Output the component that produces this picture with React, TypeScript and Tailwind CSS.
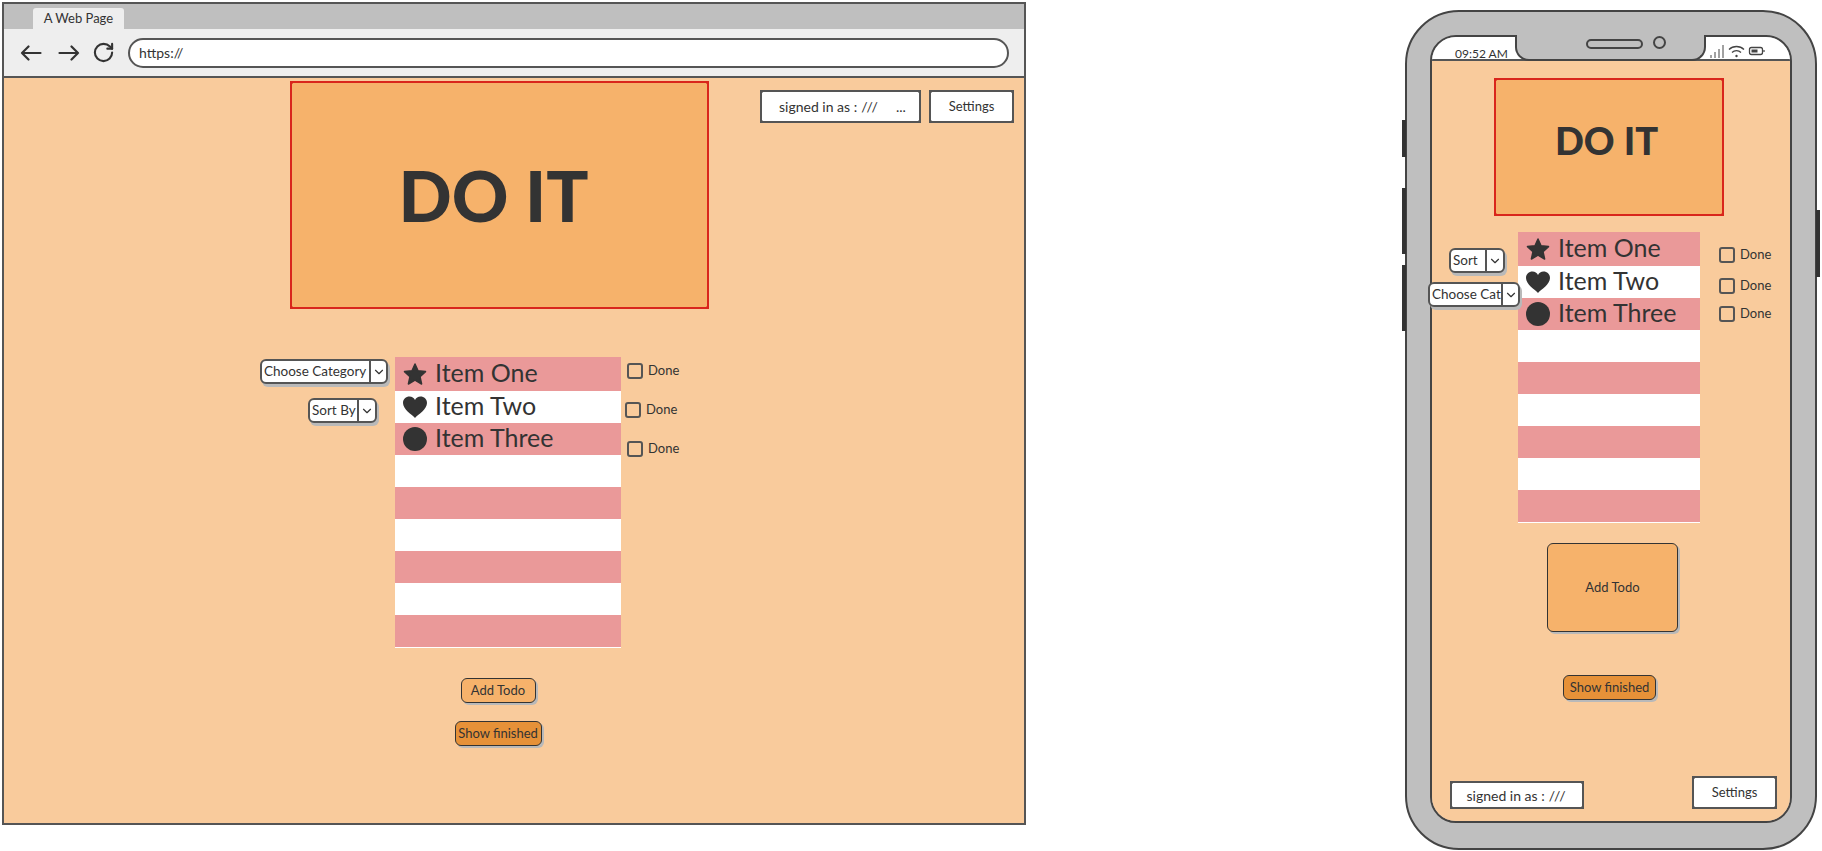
import { ChevronDown, RotateCw } from "lucide-react";

const Star = () => (
  <svg width="24" height="24" viewBox="0 0 24 24" className="shrink-0">
    <path
      d="M12 2 L15 8.8 L22.5 9.6 L17 14.6 L18.6 22 L12 18.2 L5.4 22 L7 14.6 L1.5 9.6 L9 8.8 Z"
      fill="#333"
      stroke="#333"
      strokeWidth="1.5"
      strokeLinejoin="round"
    />
  </svg>
);

const Heart = () => (
  <svg width="24" height="24" viewBox="0 0 24 24" className="shrink-0">
    <path
      d="M12 23 C9 19.5 0 14.5 0 8 C0 4 3 1.5 6.5 1.5 C9 1.5 11 3 12 5 C13 3 15 1.5 17.5 1.5 C21 1.5 24 4 24 8 C24 14.5 15 19.5 12 23 Z"
      fill="#333"
    />
  </svg>
);

const Dot = () => (
  <svg width="24" height="24" viewBox="0 0 24 24" className="shrink-0">
    <circle cx="12" cy="12" r="12" fill="#333" />
  </svg>
);

const BackArrow = () => (
  <svg width="22" height="16" viewBox="0 0 22 16" fill="none" stroke="#333" strokeWidth="2.2" strokeLinecap="round" strokeLinejoin="round" className="shrink-0">
    <path d="M20.5 8H2M8.5 1.5L2 8l6.5 6.5" />
  </svg>
);

const ForwardArrow = () => (
  <svg width="22" height="16" viewBox="0 0 22 16" fill="none" stroke="#333" strokeWidth="2.2" strokeLinecap="round" strokeLinejoin="round" className="shrink-0">
    <path d="M1.5 8H20M13.5 1.5L20 8l-6.5 6.5" />
  </svg>
);

// little nubs the sketch style leaves on box corners
const Corners = ({ color }: { color: string }) => (
  <>
    <span className={`absolute -left-[2px] -top-[2px] w-[3px] h-[3px] rounded-full ${color}`} />
    <span className={`absolute -right-[2px] -top-[2px] w-[3px] h-[3px] rounded-full ${color}`} />
    <span className={`absolute -left-[2px] -bottom-[2px] w-[3px] h-[3px] rounded-full ${color}`} />
    <span className={`absolute -right-[2px] -bottom-[2px] w-[3px] h-[3px] rounded-full ${color}`} />
  </>
);

const Select = ({ label, width, split }: { label: string; width: string; split: string }) => (
  <div
    className={`${width} h-[25px] shrink-0 flex items-stretch rounded-[6px] border-2 border-[#555] bg-white shadow-[2px_3px_0_#b9b9b9] text-[13.5px] text-[#333]`}
  >
    <div className={`${split} overflow-hidden whitespace-nowrap pl-[2px] leading-[21px] border-r-2 border-[#555]`}>{label}</div>
    <div className="flex-1 flex items-center justify-center">
      <ChevronDown size={14} strokeWidth={2} />
    </div>
  </div>
);

const Done = ({ className }: { className: string }) => (
  <div className={`h-[16px] flex items-center gap-[5px] text-[13px] text-[#333] ${className}`}>
    <div className="w-[16px] h-[16px] rounded-[3px] border-2 border-[#555]" />
    <span>Done</span>
  </div>
);

const Rows = ({ width }: { width: string }) => (
  <div className={`${width} shrink-0 bg-white text-[#333] text-[25px]`}>
    <div className="h-[34px] bg-[#ea9999] flex items-center gap-[8px] pl-[8px]">
      <Star />
      <span className="-mt-[2px]">Item One</span>
    </div>
    <div className="h-[32px] flex items-center gap-[8px] pl-[8px]">
      <Heart />
      <span className="-mt-[2px]">Item Two</span>
    </div>
    <div className="h-[32px] bg-[#ea9999] flex items-center gap-[8px] pl-[8px]">
      <Dot />
      <span className="-mt-[2px]">Item Three</span>
    </div>
    <div className="h-[32px]" />
    <div className="h-[32px] bg-[#ea9999]" />
    <div className="h-[32px]" />
    <div className="h-[32px] bg-[#ea9999]" />
    <div className="h-[32px]" />
    <div className="h-[32px] bg-[#ea9999] mb-[1px]" />
  </div>
);

const Box = ({ children, className }: { children: React.ReactNode; className: string }) => (
  <div className={`relative shrink-0 bg-white border-2 border-[#555] flex items-center text-[#333] ${className}`}>
    <Corners color="bg-[#555]" />
    {children}
  </div>
);

const Btn = ({ children, className }: { children: React.ReactNode; className: string }) => (
  <div
    className={`shrink-0 flex items-center justify-center rounded-[6px] border border-[#333] text-[13px] text-[#333] shadow-[2px_2px_0_#b9b9b9] ${className}`}
  >
    {children}
  </div>
);

const Hero = ({ className, text }: { className: string; text: string }) => (
  <div className={`relative shrink-0 bg-[#f6b26b] border-2 border-[#d9261c] flex items-center justify-center font-black text-[#333] ${className} ${text}`}>
    <Corners color="bg-[#d9261c]" />
    DO IT
  </div>
);

const Browser = () => (
  <div className="ml-[2px] mt-[2px] w-[1024px] h-[823px] shrink-0 border-2 border-[#555] flex flex-col">
    <div className="h-[25px] bg-[#bfbfbf] pl-[29px] pt-[4px]">
      <div className="w-[91px] h-[21px] rounded-t-[3px] bg-[#eeeeee] text-[13px] text-[#333] text-center leading-[21px]">A Web Page</div>
    </div>
    <div className="h-[49px] bg-[#eeeeee] border-b-2 border-[#555] flex items-center pl-[16px] text-[#333]">
      <BackArrow />
      <div className="ml-[16px]">
        <ForwardArrow />
      </div>
      <RotateCw size={23} strokeWidth={2.2} className="ml-[12px] shrink-0" />
      <div className="ml-[13px] w-[881px] h-[30px] rounded-full border-2 border-[#555] bg-white pl-[9px] text-[14px] leading-[26px]">https://</div>
    </div>
    <div className="flex-1 bg-[#f9cb9c]">
      <div className="flex items-start">
        <Hero className="ml-[286px] mt-[3px] w-[419px] h-[228px] pt-[1px] pr-[12px]" text="text-[70px]" />
        <Box className="ml-[51px] mt-[12px] w-[161px] h-[33px] pl-[17px] text-[14px]">
          <span>signed in as : </span>
          <span className="ml-[4px] tracking-[2px]">///</span>
          <span className="ml-[16px]">...</span>
        </Box>
        <Box className="ml-[8px] mt-[12px] w-[85px] h-[33px] justify-center text-[13px]">Settings</Box>
      </div>
      <div className="flex items-start mt-[48px]">
        <div className="w-[391px] shrink-0 flex flex-col items-end pr-[7px] pt-[2px]">
          <Select label="Choose Category" width="w-[128px]" split="w-[109px]" />
          <div className="mt-[14px] mr-[11px]">
            <Select label="Sort By" width="w-[69px]" split="w-[49px]" />
          </div>
        </div>
        <Rows width="w-[226px]" />
        <div className="ml-[6px] pt-[6px] flex flex-col">
          <Done className="" />
          <Done className="mt-[23px] -ml-[2px]" />
          <Done className="mt-[23px]" />
        </div>
      </div>
      <div className="w-[988px] mt-[30px] flex flex-col items-center">
        <Btn className="w-[75px] h-[25px] bg-[#f6b26b]">Add Todo</Btn>
        <Btn className="mt-[18px] w-[87px] h-[25px] bg-[#e69138]">Show finished</Btn>
      </div>
    </div>
  </div>
);

const Phone = () => (
  <div className="relative ml-[379px] mt-[10px] w-[412px] h-[840px] shrink-0 rounded-[54px] border-2 border-[#444] bg-[#bfbfbf] pl-[23px] pt-[23px]">
    {/* side buttons */}
    <div className="absolute -left-[5px] top-[108px] w-[4px] h-[37px] bg-[#333]" />
    <div className="absolute -left-[5px] top-[176px] w-[4px] h-[66px] bg-[#333]" />
    <div className="absolute -left-[5px] top-[253px] w-[4px] h-[66px] bg-[#333]" />
    <div className="absolute -right-[5px] top-[198px] w-[4px] h-[67px] bg-[#333]" />

    <div className="relative w-[362px] h-[788px] rounded-[26px] border-2 border-[#444] flex flex-col">
      <div className="absolute -top-[2px] left-[83px] w-[191px] h-[26px] rounded-b-[14px] border-x-2 border-b-2 border-[#444] bg-[#bfbfbf] flex items-start pl-[69px] pt-[4px]">
        <div className="w-[57px] h-[10px] rounded-full border-2 border-[#444]" />
        <div className="ml-[10px] -mt-[3px] w-[13px] h-[13px] rounded-full border-2 border-[#444]" />
      </div>
      <div className="h-[24px] shrink-0 rounded-t-[24px] bg-white border-b-2 border-[#555] flex items-end overflow-hidden">
        <div className="w-[274px] shrink-0 pl-[23px] text-[12px] leading-[13px] -mb-[1px] text-[#333]">09:52 AM</div>
        <svg width="56" height="14" viewBox="0 0 56 14" className="ml-[4px] mb-[1px] shrink-0" fill="none" stroke="#444">
          <path d="M1 14V11M5 14V8M9 14V5M13 14V1" strokeWidth="1" />
          <path d="M19 5.5C23 1.5 30 1.5 34 5.5M22 8.5C24.5 6 28.5 6 31 8.5" strokeWidth="1.3" />
          <circle cx="26.5" cy="12" r="1.2" fill="#444" stroke="none" />
          <rect x="39.5" y="3.5" width="13" height="7" rx="2" strokeWidth="1.3" />
          <rect x="41.5" y="5.5" width="6" height="3" fill="#444" stroke="none" />
          <path d="M54 6V8" strokeWidth="1.2" />
        </svg>
      </div>
      <div className="flex-1 rounded-b-[24px] bg-[#f9cb9c]">
        <Hero className="ml-[62px] mt-[17px] w-[230px] h-[138px] pb-[14px] pr-[5px]" text="text-[38px]" />
        <div className="flex items-start mt-[16px]">
          <div className="w-[86px] shrink-0 flex flex-col items-start z-10">
            <div className="ml-[17px] mt-[16px]">
              <Select label="Sort" width="w-[56px]" split="w-[36px]" />
            </div>
            <div className="-ml-[4px] mt-[9px]">
              <Select label="Choose Cat" width="w-[92px]" split="w-[73px]" />
            </div>
          </div>
          <Rows width="w-[182px]" />
          <div className="ml-[19px] pt-[15px] flex flex-col">
            <Done className="" />
            <Done className="mt-[15px]" />
            <Done className="mt-[12px]" />
          </div>
        </div>
        <Btn className="ml-[115px] mt-[20px] w-[131px] h-[89px] bg-[#f6b26b]">Add Todo</Btn>
        <Btn className="ml-[131px] mt-[43px] w-[93px] h-[25px] bg-[#e69138]">Show finished</Btn>
        <div className="mt-[76px] pl-[18px] pr-[13px] flex items-end justify-between">
          <Box className="w-[134px] h-[28px] justify-center text-[14px]">
            <span>signed in as : </span>
            <span className="ml-[4px] tracking-[2px]">///</span>
          </Box>
          <Box className="w-[85px] h-[33px] justify-center text-[13px]">Settings</Box>
        </div>
      </div>
    </div>
  </div>
);

export default function App() {
  return (
    <div className="w-[1822px] h-[851px] bg-white flex items-start overflow-hidden font-['Lato',sans-serif]">
      <Browser />
      <Phone />
    </div>
  );
}
